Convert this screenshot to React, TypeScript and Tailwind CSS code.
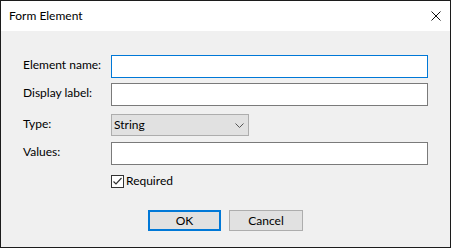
const font = { fontFamily: '"Segoe UI", Lato, "Noto Sans", Arial, sans-serif' }

function Row({ label, top, children }: { label: string; top: string; children: React.ReactNode }) {
  return (
    <div className={`flex items-center ${top}`}>
      <label className="w-[88px] shrink-0 pb-[3px] text-[12px] text-black">{label}</label>
      {children}
    </div>
  )
}

export default function App() {
  return (
    <div
      className="w-[451px] h-[248px] border border-[#1c1c1c] bg-[#f0f0f0] flex flex-col overflow-hidden"
      style={font}
    >
      <div className="h-[30px] shrink-0 bg-white flex items-center justify-between pl-2 pr-[9px]">
        <span className="pb-[1px] text-[12px] text-black">Form Element</span>
        <svg width="10" height="10" viewBox="0 0 10 10" className="mb-[1px]">
          <path d="M0.5 0.5L9.5 9.5M9.5 0.5L0.5 9.5" stroke="#111" strokeWidth="1" />
        </svg>
      </div>

      <div className="flex flex-col pl-[22px] pr-[22px] pt-[24px]">
        <Row label="Element name:" top="">
          <input className="h-[23px] w-[317px] bg-white border border-[#0078d7] outline-none" />
        </Row>
        <Row label="Display label:" top="mt-[5px]">
          <input className="h-[23px] w-[317px] bg-white border border-[#7a7a7a] outline-none" />
        </Row>
        <Row label="Type:" top="mt-[8px]">
          <div className="h-[22px] w-[138px] bg-[#e1e1e1] border border-[#adadad] flex items-center justify-between pl-[2px] pr-[4px]">
            <span className="text-[12px] text-black">String</span>
            <svg width="9" height="5" viewBox="0 0 9 5">
              <path d="M0.5 0.5L4.5 4.5L8.5 0.5" stroke="#555" strokeWidth="1" fill="none" />
            </svg>
          </div>
        </Row>
        <Row label="Values:" top="mt-[6px]">
          <input className="h-[23px] w-[317px] bg-white border border-[#7a7a7a] outline-none" />
        </Row>
        <div className="flex items-center mt-[7px] pl-[88px]">
          <div className="w-[13px] h-[13px] border border-[#333] bg-white flex items-center justify-center">
            <svg width="11" height="11" viewBox="0 0 11 11">
              <path d="M1.5 5.5L4 8L9.5 2" stroke="#333" strokeWidth="1.2" fill="none" />
            </svg>
          </div>
          <span className="ml-[2px] text-[12px] text-black">Required</span>
        </div>
        <div className="flex mt-[20px] pl-[125px] gap-[8px]">
          <button className="w-[73px] h-[21px] bg-[#e1e1e1] border-2 border-[#0078d7] text-[12px] text-black">
            OK
          </button>
          <button className="w-[74px] h-[21px] bg-[#e1e1e1] border border-[#adadad] text-[12px] text-black">
            Cancel
          </button>
        </div>
      </div>
    </div>
  )
}
